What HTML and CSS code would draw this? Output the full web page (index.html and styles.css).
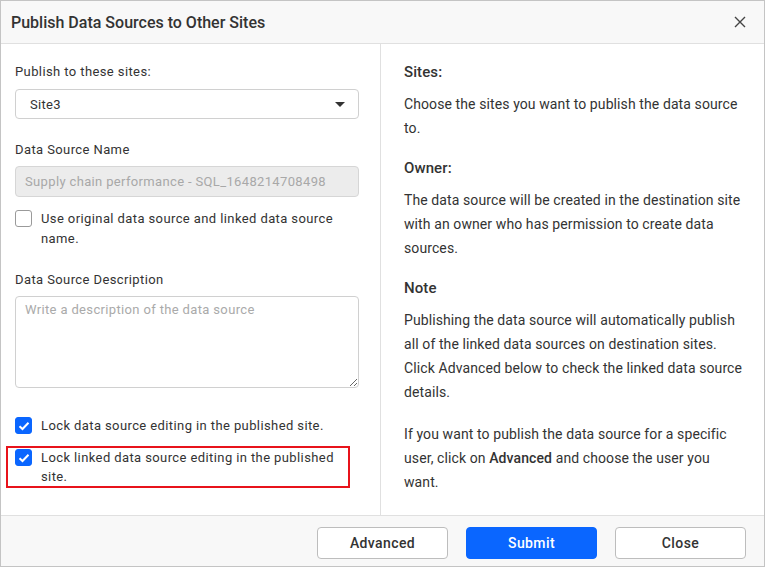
FILE: index.html
```html
<!DOCTYPE html>
<html>
<head>
<meta charset="utf-8">
<link rel="stylesheet" href="styles.css">
</head>
<body>
<div class="dialog">
  <div class="header">
    <div class="title">Publish Data Sources to Other Sites</div>
    <svg class="close" width="12" height="12" viewBox="0 0 12 12"><path d="M1 1L11 11M11 1L1 11" stroke="#444" stroke-width="1.4" fill="none"/></svg>
  </div>
  <div class="body">
    <div class="left">
      <div class="label">Publish to these sites:</div>
      <div class="select">
        <span>Site3</span>
        <svg width="10" height="5" viewBox="0 0 10 5"><path d="M0 0H10L5 5Z" fill="#333"/></svg>
      </div>
      <div class="label gap-top">Data Source Name</div>
      <div class="input disabled">Supply chain performance - SQL_1648214708498</div>
      <div class="check-row first">
        <span class="box"></span>
        <span class="check-text">Use original data source and linked data source name.</span>
      </div>
      <div class="label gap-top">Data Source Description</div>
      <textarea class="textarea" placeholder="Write a description of the data source"></textarea>
      <div class="check-row lock1">
        <span class="box checked"><svg width="12" height="10" viewBox="0 0 12 10"><path d="M1.5 5.2L4.5 8L10.5 1.8" stroke="#fff" stroke-width="2" fill="none"/></svg></span>
        <span class="check-text">Lock data source editing in the published site.</span>
      </div>
      <div class="check-row highlight">
        <span class="box checked"><svg width="12" height="10" viewBox="0 0 12 10"><path d="M1.5 5.2L4.5 8L10.5 1.8" stroke="#fff" stroke-width="2" fill="none"/></svg></span>
        <span class="check-text">Lock linked data source editing in the published site.</span>
      </div>
    </div>
    <div class="right">
      <div class="heading">Sites:</div>
      <p>Choose the sites you want to publish the data source to.</p>
      <div class="heading">Owner:</div>
      <p>The data source will be created in the destination site with an owner who has permission to create data sources.</p>
      <div class="heading">Note</div>
      <p>Publishing the data source will automatically publish all of the linked data sources on destination sites. Click Advanced below to check the linked data source details.</p>
      <p>If you want to publish the data source for a specific user, click on <b>Advanced</b> and choose the user you want.</p>
    </div>
  </div>
  <div class="footer">
    <button class="btn">Advanced</button>
    <button class="btn primary">Submit</button>
    <button class="btn">Close</button>
  </div>
</div>
</body>
</html>
```
FILE: styles.css
```css
* { box-sizing: border-box; }
html, body { margin: 0; padding: 0; background: #fff; }
body { font-family: Roboto, "Liberation Sans", sans-serif; color: #333; }
.dialog {
  width: 765px; height: 567px;
  border: 1px solid #c4c4c4;
  display: flex; flex-direction: column;
}
.header {
  height: 43px; flex: none;
  background: #f8f8f8;
  border-bottom: 1px solid #e0e0e0;
  display: flex; align-items: center; justify-content: space-between;
  padding: 0 18px 0 10px;
}
.title { font-size: 16px; font-weight: 500; color: #333; letter-spacing: 0; }
.close { display: block; }
.body { flex: 1; display: flex; min-height: 0; }
.left {
  width: 380px; flex: none;
  border-right: 1px solid #e0e0e0;
  padding: 18px 21px 0 14px;
  display: flex; flex-direction: column;
}
.label { font-size: 13px; line-height: 20px; color: #333; letter-spacing: 0.4px; }
.gap-top { margin-top: 21px; }
.select {
  margin-top: 7px; height: 30px;
  border: 1px solid #d0d0d0; border-radius: 4px;
  display: flex; align-items: center; justify-content: space-between;
  padding: 0 13px 0 14px;
  font-size: 13px; color: #333; letter-spacing: 0.3px;
}
.input {
  margin-top: 6px; height: 31px;
  border: 1px solid #d6d6d6; border-radius: 4px;
  display: flex; align-items: center; padding: 0 9px;
  font-size: 13px; letter-spacing: 0.35px;
}
.input.disabled { background: #ececec; color: #a8a8a8; }
.check-row { display: flex; align-items: flex-start; gap: 9px; font-size: 13px; line-height: 20px; }
.check-row.first { margin-top: 12px; }
.box {
  width: 17px; height: 17px; flex: none; margin-top: 1px;
  border: 1px solid #9a9a9a; border-radius: 3px;
  display: flex; align-items: center; justify-content: center;
}
.box.checked { background: #0a66ff; border-color: #0a66ff; }
.check-text { letter-spacing: 0.4px; color: #333; }
.textarea {
  margin-top: 6px; height: 92px; width: 100%;
  border: 1px solid #d0d0d0; border-radius: 4px;
  padding: 5px 9px; resize: vertical;
  font-family: Roboto, "Liberation Sans", sans-serif; font-size: 13px; color: #333;
  letter-spacing: 0.35px;
}
.textarea::placeholder { color: #aaa; }
.lock1 { margin-top: 28px; }
.highlight {
  margin: 10px 9px 0 -9px;
  border: 2px solid #e8131b;
  padding: 0 10px 0 7px;
  line-height: 19px;
}
.right { flex: 1; padding: 18px 18px 0 23px; font-size: 14px; letter-spacing: 0.1px; }
.heading { font-size: 15px; font-weight: 500; line-height: 20px; color: #333; margin-bottom: 10px; }
.right p { margin: 0 0 18px; line-height: 24px; color: #333; }
.right p b { font-weight: 500; }
.footer {
  height: 51px; flex: none;
  background: #f8f8f8;
  border-top: 1px solid #e0e0e0;
  display: flex; align-items: flex-start; justify-content: flex-end;
  padding: 11px 18px 0 0; gap: 18px;
}
.btn {
  width: 131px; height: 32px;
  border: 1px solid #bdbdbd; border-radius: 4px;
  background: #fff; color: #333;
  font-family: Roboto, "Liberation Sans", sans-serif; font-size: 14px; font-weight: 500;
  letter-spacing: 0.4px;
}
.btn.primary { background: #0a66ff; border-color: #0a66ff; color: #fff; }
```
